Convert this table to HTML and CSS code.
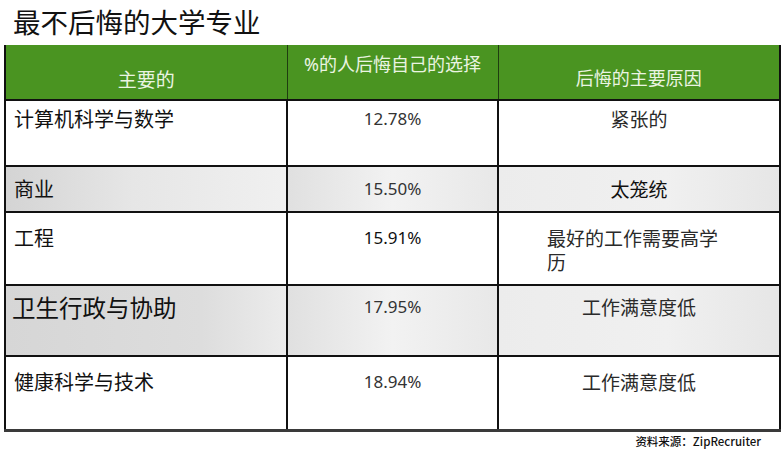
FILE: index.html
```html
<!DOCTYPE html>
<html lang="zh-CN">
<head>
<meta charset="utf-8">
<title>最不后悔的大学专业</title>
<link rel="stylesheet" href="styles.css">
</head>
<body>
<div class="page">
  <h1 class="title">最不后悔的大学专业</h1>
  <table class="grid">
    <colgroup>
      <col class="c1"><col class="c2"><col class="c3">
    </colgroup>
    <thead>
      <tr class="head">
        <th class="h1">主要的</th>
        <th class="h2">%的人后悔自己的选择</th>
        <th class="h3">后悔的主要原因</th>
      </tr>
    </thead>
    <tbody>
      <tr class="r r1">
        <td class="major">计算机科学与数学</td>
        <td class="pct">12.78%</td>
        <td class="why">紧张的</td>
      </tr>
      <tr class="r r2 shade">
        <td class="major">商业</td>
        <td class="pct">15.50%</td>
        <td class="why dark">太笼统</td>
      </tr>
      <tr class="r r3">
        <td class="major">工程</td>
        <td class="pct dark">15.91%</td>
        <td class="why left">最好的工作需要高学历</td>
      </tr>
      <tr class="r r4 shade">
        <td class="major big">卫生行政与协助</td>
        <td class="pct">17.95%</td>
        <td class="why">工作满意度低</td>
      </tr>
      <tr class="r r5 last">
        <td class="major">健康科学与技术</td>
        <td class="pct">18.94%</td>
        <td class="why">工作满意度低</td>
      </tr>
    </tbody>
  </table>
  <div class="source">资料来源：ZipRecruiter</div>
</div>
</body>
</html>
```

FILE: styles.css
```css
* { box-sizing: border-box; }
html, body { margin: 0; padding: 0; background: #ffffff; }
body {
  font-family: "Noto Sans", "Noto Sans CJK SC", sans-serif;
  color: #1a1a1a;
  width: 783px;
  height: 456px;
  overflow: hidden;
}
.page { padding: 0 0 0 4px; }
.title {
  margin: 0;
  padding: 5px 0 0 9px;
  height: 45px;
  font-size: 27.5px;
  line-height: 32px;
  font-weight: 400;
  color: #111;
  font-family: "Noto Sans CJK SC", "Noto Sans", sans-serif;
}
.grid {
  width: 775px;
  border-collapse: collapse;
  table-layout: fixed;
  font-family: "Noto Sans", "Noto Sans CJK SC", sans-serif;
}
.c1 { width: 282px; }
.c2 { width: 211px; }
.c3 { width: 282px; }

.head th {
  background: #4a9421;
  color: #eaf4e2;
  font-weight: 400;
  font-size: 18px;
  line-height: 22px;
  height: 55px;
  padding: 0;
  text-align: center;
  border-left: 1px solid #1f3d10;
  border-right: 1px solid #1f3d10;
  border-bottom: 2px solid #111;
}
.head .h1 { border-left: 2px solid #111; vertical-align: top; padding-top: 24px; font-size: 19px; }
.head .h2 { vertical-align: top; padding-top: 8px; }
.head .h3 { border-right: 2px solid #111; vertical-align: top; padding-top: 22px; }

.r td {
  border: 2px solid #111;
  vertical-align: top;
  line-height: 24px;
  padding-top: 6px;
}
.r1 td { height: 66px; padding-top: 6px; }
.r2 td { height: 46px; padding-top: 10px; }
.r3 td { height: 73px; padding-top: 13px; }
.r4 td { height: 71px; padding-top: 11px; }
.r5 td { height: 74px; padding-top: 13px; }
.last td { border-bottom: 3px solid #3a3a3a; }

.major {
  font-family: "Noto Sans CJK SC", sans-serif;
  font-size: 20px;
  padding-left: 8px;
  color: #111;
}
.major.big { font-size: 23.5px; padding-top: 9px; padding-left: 6px; }
.pct {
  text-align: center;
  font-size: 17px;
  color: #333;
}
.r4 .pct, .r4 .why { padding-top: 9px; }
.why {
  text-align: center;
  font-family: "Noto Sans CJK SC", sans-serif;
  font-size: 19px;
  color: #2a2a2a;
}
.why.left { text-align: left; padding-left: 48px; padding-right: 50px; line-height: 24px; }
.dark { color: #111; }

.shade td { background: linear-gradient(90deg, #d4d4d4 0%, #e6e6e6 45%, #f0f0f0 100%); }
.shade td.pct { background: linear-gradient(90deg, #e0e0e0 0%, #f2f2f2 50%, #e8e8e8 100%); }
.shade td.why { background: linear-gradient(90deg, #ececec 0%, #f0f0f0 60%, #e6e6e6 100%); }
.r4 td.major { background: linear-gradient(90deg, #d6d6d6 0%, #dddddd 70%, #ececec 100%); }

.source {
  width: 757px;
  text-align: right;
  font-family: "Noto Sans CJK SC", sans-serif;
  font-size: 11.5px;
  font-weight: 500;
  line-height: 16px;
  padding-top: 1px;
  color: #111;
}
```
